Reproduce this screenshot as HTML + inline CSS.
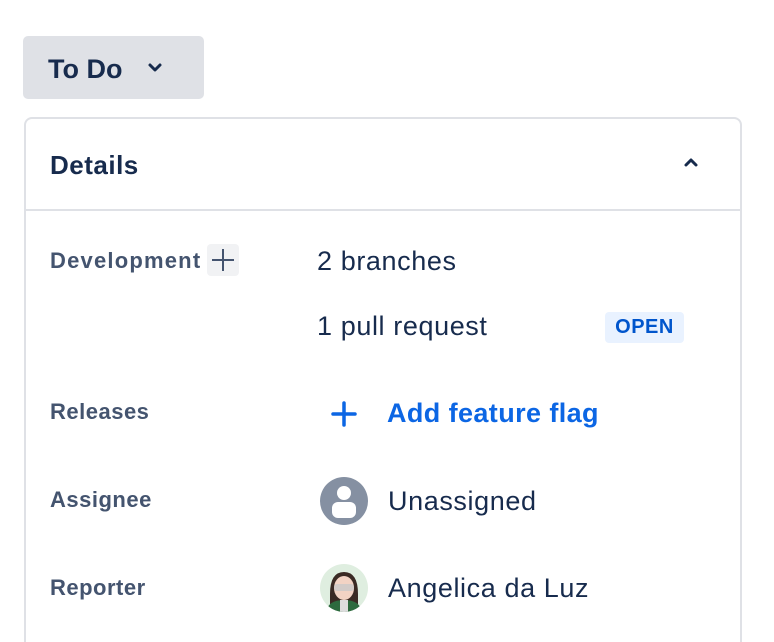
<!DOCTYPE html>
<html><head><meta charset="utf-8"><style>
*{margin:0;padding:0;box-sizing:border-box}
html,body{width:774px;height:642px;overflow:hidden}
body{background:#fff;font-family:"Liberation Sans",sans-serif;color:#172b4d;position:relative}
.abs{position:absolute;white-space:nowrap}
.btn{left:23px;top:36px;width:181px;height:63px;background:#dfe1e6;border-radius:5px}
.panel{left:24px;top:117px;width:718px;height:525px;border:2px solid #dfe1e6;border-bottom:none;border-radius:8px 8px 0 0}
.div{left:25px;top:209px;width:716px;height:2px;background:#dfe1e6}
.lbl{left:50px;font-size:22px;font-weight:bold;color:#44546f;line-height:24px;letter-spacing:.5px}
.val{font-size:27px;line-height:30px;color:#172b4d;letter-spacing:.6px}
</style></head><body>
<div class="abs btn"></div>
<div class="abs" style="left:48px;top:53px;font-size:27px;font-weight:bold;line-height:32px">To Do</div>
<svg class="abs" style="left:147px;top:61px" width="16" height="14" viewBox="0 0 16 14"><path d="M3 4l5 5 5-5" fill="none" stroke="#172b4d" stroke-width="3" stroke-linecap="round" stroke-linejoin="round"/></svg>
<div class="abs panel"></div>
<div class="abs" style="left:50px;top:150px;font-size:26px;font-weight:bold;line-height:30px;letter-spacing:.5px">Details</div>
<svg class="abs" style="left:682px;top:155px" width="18" height="14" viewBox="0 0 18 14"><path d="M4 10l5-5 5 5" fill="none" stroke="#172b4d" stroke-width="3" stroke-linecap="round" stroke-linejoin="round"/></svg>
<div class="abs div"></div>
<div class="abs lbl" style="top:249px;letter-spacing:1.2px">Development</div>
<div class="abs" style="left:207px;top:244px;width:32px;height:32px;background:#f1f2f4;border-radius:4px"></div>
<svg class="abs" style="left:207px;top:244px" width="32" height="32" viewBox="0 0 32 32"><path d="M16 5v22M5 16h22" stroke="#44546f" stroke-width="2"/></svg>
<div class="abs val" style="left:317px;top:246px">2 branches</div>
<div class="abs val" style="left:317px;top:311px">1 pull request</div>
<div class="abs" style="left:605px;top:312px;width:79px;height:31px;background:#e9f2ff;border-radius:4px;color:#0055cc;font-weight:bold;font-size:20px;line-height:31px;text-align:center;letter-spacing:.5px">OPEN</div>
<div class="abs lbl" style="top:400px">Releases</div>
<svg class="abs" style="left:330px;top:400px" width="28" height="28" viewBox="0 0 28 28"><path d="M14 3v22M3 14h22" stroke="#0c66e4" stroke-width="3.5" stroke-linecap="round"/></svg>
<div class="abs val" style="left:387px;top:398px;color:#0c66e4;font-weight:bold;letter-spacing:.4px">Add feature flag</div>
<div class="abs lbl" style="top:488px">Assignee</div>
<svg class="abs" style="left:320px;top:477px" width="48" height="48" viewBox="0 0 48 48"><circle cx="24" cy="24" r="24" fill="#8590a2"/><circle cx="24" cy="16" r="7" fill="#fff"/><rect x="12" y="25" width="24" height="16" rx="6" fill="#fff"/></svg>
<div class="abs val" style="left:388px;top:486px">Unassigned</div>
<div class="abs lbl" style="top:576px">Reporter</div>
<svg class="abs" style="left:320px;top:564px" width="48" height="48" viewBox="0 0 48 48"><defs><clipPath id="c"><circle cx="24" cy="24" r="24"/></clipPath></defs><g clip-path="url(#c)"><rect width="48" height="48" fill="#dfeee0"/><path d="M10 30q0-22 14-22t14 22v10H10z" fill="#3a2a24"/><ellipse cx="24" cy="24" rx="10" ry="12" fill="#f2d3c4"/><rect x="14" y="20" width="20" height="7" rx="3" fill="#c9c9c9" opacity=".8"/><path d="M6 48q2-12 18-12t18 12z" fill="#2d6a3e"/><rect x="20" y="36" width="8" height="12" fill="#ddd"/></g></svg>
<div class="abs val" style="left:388px;top:573px">Angelica da Luz</div>
</body></html>
